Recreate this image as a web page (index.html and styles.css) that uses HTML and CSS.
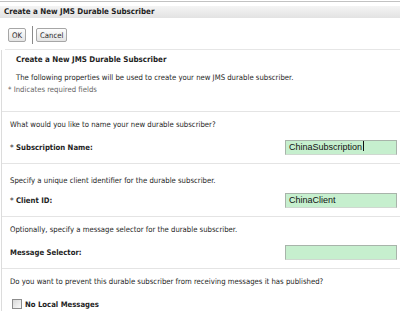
FILE: index.html
```html
<!DOCTYPE html>
<html lang="en">
<head>
    <meta charset="UTF-8">
    <title>Create a New JMS Durable Subscriber</title>
    <link rel="stylesheet" href="styles.css">
</head>
<body>
    <div class="window">
        <div class="title-bar">Create a New JMS Durable Subscriber</div>
        <div class="toolbar">
            <button type="button" class="btn">OK</button>
            <span class="toolbar-sep"></span>
            <button type="button" class="btn">Cancel</button>
        </div>
        <div class="panel">
            <div class="intro">
                <h2>Create a New JMS Durable Subscriber</h2>
                <p class="intro-text">The following properties will be used to create your new JMS durable subscriber.</p>
                <p class="required-note">* Indicates required fields</p>
            </div>
            <div class="section">
                <p class="question">What would you like to name your new durable subscriber?</p>
                <div class="field">
                    <label><span class="req">*</span> Subscription Name:</label>
                    <div class="text-box">ChinaSubscription<span class="caret"></span></div>
                </div>
            </div>
            <div class="section">
                <p class="question spaced">Specify a unique client identifier for the durable subscriber.</p>
                <div class="field">
                    <label><span class="req">*</span> Client ID:</label>
                    <div class="text-box">ChinaClient</div>
                </div>
            </div>
            <div class="section">
                <p class="question">Optionally, specify a message selector for the durable subscriber.</p>
                <div class="field">
                    <label>Message Selector:</label>
                    <div class="text-box"></div>
                </div>
            </div>
            <div class="section last">
                <p class="question">Do you want to prevent this durable subscriber from receiving messages it has published?</p>
                <div class="check">
                    <span class="check-box"></span>
                    <label>No Local Messages</label>
                </div>
            </div>
        </div>
    </div>
</body>
</html>
```

FILE: styles.css
```css
body {
    margin: 0;
    font-family: "DejaVu Sans Condensed", "DejaVu Sans", sans-serif;
    font-size: 7.7px;
    color: #1e1e1e;
    background: #fff;
}
.window {
    margin-top: 1px;
    border-top: 1px solid #c2c2c2;
}
.title-bar {
    margin-top: 4px;
    height: 12px;
    line-height: 12px;
    padding-left: 4px;
    font-weight: bold;
    font-size: 7.9px;
    background: linear-gradient(#f4f4f4, #e2e2e2);
}
.toolbar {
    display: flex;
    align-items: center;
    height: 14px;
    padding: 10px 0 7px 3px;
    margin-left: 5px;
    border-bottom: 1px solid #e6e6e6;
}
.btn {
    height: 14px;
    padding: 0 3px;
    font-family: inherit;
    font-size: 7.7px;
    color: #1e1e1e;
    border: 1px solid #a6a6a6;
    border-radius: 2px;
    background: linear-gradient(#fdfdfd, #e4e4e4);
}
.toolbar-sep {
    width: 1px;
    height: 18px;
    margin: 0 3px 0 6px;
    background: #8a8a8a;
}
.panel {
    margin-left: 1px;
    border-left: 1px solid #dcdcdc;
}
.intro {
    padding: 4px 0 15px 6px;
    border-bottom: 1px solid #e4e4e4;
}
.intro h2 {
    margin: 0 0 0 8px;
    font-size: 7.9px;
    line-height: 12px;
}
.intro-text {
    margin: 6px 0 0 8px;
    line-height: 12px;
}
.required-note {
    margin: 0;
    line-height: 12px;
    color: #666;
}
.section {
    padding: 7px 3px 8px 8px;
    border-bottom: 1px solid #e4e4e4;
}
.section.last {
    border-bottom: none;
}
.question {
    margin: 0;
    line-height: 12px;
}
.question.spaced {
    padding-top: 4px;
    margin-bottom: -3px;
}
.field {
    display: flex;
    justify-content: space-between;
    align-items: center;
    height: 16px;
    margin-top: 8px;
}
.field label {
    font-weight: bold;
}
.req {
    color: #555;
}
.text-box {
    box-sizing: border-box;
    width: 112px;
    height: 15px;
    padding-left: 3px;
    font-family: "Liberation Sans", Arial, sans-serif;
    font-size: 9px;
    line-height: 13px;
    color: #111;
    background: #c6efce;
    border: 1px solid #a8b4aa;
    border-bottom-color: #cfd8d0;
}
.caret {
    display: inline-block;
    width: 1px;
    height: 10px;
    margin-left: 1px;
    vertical-align: -1px;
    background: #111;
}
.check {
    display: flex;
    align-items: center;
    gap: 3px;
    height: 16px;
    margin: 8px 0 0 2px;
}
.check label {
    font-weight: bold;
}
.check-box {
    box-sizing: border-box;
    width: 10px;
    height: 10px;
    border: 1px solid #8c8c8c;
    background: linear-gradient(135deg, #d8d8d8, #fafafa);
}
```
